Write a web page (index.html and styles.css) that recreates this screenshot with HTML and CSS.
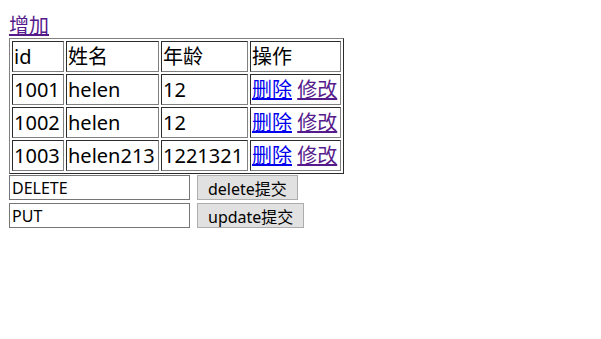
FILE: index.html
```html
<!DOCTYPE html>
<html lang="zh-CN">
<head>
  <meta charset="UTF-8">
  <title>用户列表</title>
  <link rel="stylesheet" href="styles.css">
</head>
<body>

<div class="add-line">
  <a href="#add" class="visited">增加</a>
</div>

<table class="user-table">
  <tr>
    <td class="col-id">id</td>
    <td class="col-name">姓名</td>
    <td class="col-age">年龄</td>
    <td class="col-op">操作</td>
  </tr>
  <tr>
    <td>1001</td>
    <td>helen</td>
    <td>12</td>
    <td><a href="#del">删除</a> <a href="#edit" class="visited">修改</a></td>
  </tr>
  <tr>
    <td>1002</td>
    <td>helen</td>
    <td>12</td>
    <td><a href="#del">删除</a> <a href="#edit" class="visited">修改</a></td>
  </tr>
  <tr>
    <td>1003</td>
    <td>helen213</td>
    <td>1221321</td>
    <td><a href="#del">删除</a> <a href="#edit" class="visited">修改</a></td>
  </tr>
</table>

<form class="method-form" method="post" action="#">
  <input type="text" name="_method" value="DELETE">
  <button type="submit">delete提交</button>
</form>
<form class="method-form" method="post" action="#">
  <input type="text" name="_method" value="PUT">
  <button type="submit">update提交</button>
</form>

</body>
</html>
```

FILE: styles.css
```css
body {
  margin: 8px 8px 8px 9px;
  font-family: "Noto Sans", "Noto Sans CJK SC", sans-serif;
  font-size: 20px;
  color: #000;
  background-color: #fff;
}
a {
  color: #0000ee;
}
a.visited {
  color: #551a8b;
}
.add-line {
  padding-top: 5px;
  line-height: 25px;
}
.user-table {
  border: 1px outset grey;
  border-spacing: 2px;
  line-height: 27px;
}
.user-table td {
  border: 1px inset grey;
  padding: 1px;
  white-space: nowrap;
}
.user-table .col-id {
  width: 48px;
}
.user-table .col-name {
  width: 89px;
}
.user-table .col-age {
  width: 83px;
}
.user-table .col-op {
  width: 87px;
}
.method-form {
  display: flex;
  align-items: center;
  gap: 7px;
  margin-top: 1px;
}
.method-form + .method-form {
  margin-top: 3px;
}
.method-form input {
  width: 181px;
  height: 25px;
  box-sizing: border-box;
  padding: 0 2px;
  border: 1px solid #767676;
  font-family: "Noto Sans", "Noto Sans CJK SC", sans-serif;
  font-size: 16px;
  color: #000;
  margin: 0;
}
.method-form button {
  height: 25px;
  box-sizing: border-box;
  padding: 0 10px;
  border: 1px solid #adadad;
  background-color: #e1e1e1;
  font-family: "Noto Sans", "Noto Sans CJK SC", sans-serif;
  font-size: 16px;
  color: #000;
  margin: 0;
}
```
